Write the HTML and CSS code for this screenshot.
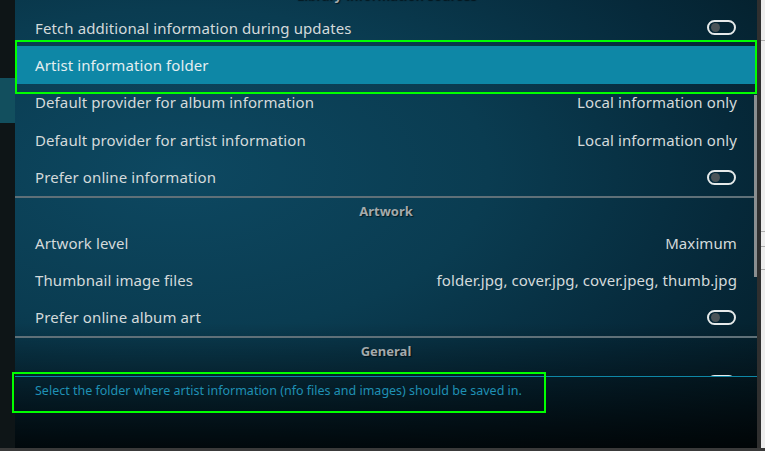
FILE: index.html
```html
<!DOCTYPE html>
<html lang="en">
<head>
    <meta charset="UTF-8">
    <meta name="viewport" content="width=device-width, initial-scale=1.0">
    <title>Music library settings</title>
    <link rel="stylesheet" href="styles.css">
</head>
<body>

<div class="app">
    <div class="sidebar">
        <div class="side-item active"></div>
    </div>

    <div class="panel">
        <div class="list">
            <div class="group-head">Library information sources</div>
            <div class="row"><span class="label">Fetch additional information during updates</span><span class="toggle"></span></div>
            <div class="row selected"><span class="label">Artist information folder</span></div>
            <div class="row"><span class="label">Default provider for album information</span><span class="value">Local information only</span></div>
            <div class="row"><span class="label">Default provider for artist information</span><span class="value">Local information only</span></div>
            <div class="row"><span class="label">Prefer online information</span><span class="toggle"></span></div>

            <div class="group-head">Artwork</div>
            <div class="row"><span class="label">Artwork level</span><span class="value">Maximum</span></div>
            <div class="row"><span class="label">Thumbnail image files</span><span class="value">folder.jpg, cover.jpg, cover.jpeg, thumb.jpg</span></div>
            <div class="row"><span class="label">Prefer online album art</span><span class="toggle"></span></div>

            <div class="group-head">General</div>
            <!-- следующая строка почти целиком скрыта, видно только верх переключателя -->
            <div class="row"><span class="label"></span><span class="toggle"></span></div>

            <div class="scrollbar"></div>
        </div>

        <div class="description">Select the folder where artist information (nfo files and images) should be saved in.</div>
    </div>

    <div class="frame"></div>
    <div class="desktop">
        <div class="desk-line"></div>
        <div class="desk-line"></div>
        <div class="desk-line"></div>
        <div class="desk-line"></div>
    </div>

    <!-- рамки-пометки поверх скриншота -->
    <div class="mark mark-row"></div>
    <div class="mark mark-desc"></div>
</div>
<div class="statusbar"></div>

</body>
</html>
```

FILE: styles.css
```css
body { margin: 0; padding: 0; width: 765px; height: 451px; overflow: hidden; background-color: #0e1517; font-family: "Noto Sans", "Open Sans", sans-serif; }
.app { position: relative; display: flex; height: 448px; }
.statusbar { height: 3px; background-color: #3a3a3a; }

.sidebar { width: 15px; background-color: #0e1517; }
.side-item.active { margin-top: 78px; height: 45px; background-color: #124f5e; }

.panel { width: 742px; display: flex; flex-direction: column;
    background:
        linear-gradient(to bottom, rgba(0,0,0,0) 0%, rgba(0,0,0,0) 72%, rgba(0,0,0,0.8) 100%),
        radial-gradient(ellipse 110% 95% at 22% 38%, #0d4861 0%, #0a3c51 38%, #06293a 68%, #031820 100%); }

.list { position: relative; height: 376px; overflow: hidden; }
.list > :first-child { margin-top: -20px; }

.group-head { height: 26px; border-top: 2px solid #5f7078; display: flex; align-items: center; justify-content: center; font-size: 13px; font-weight: bold; color: #a4aaac; text-shadow: 1px 1px 1px rgba(0,0,0,0.6); }
.list > .group-head:first-child { border-top: none; height: 29px; }

.row { height: 37.4px; display: flex; align-items: center; justify-content: space-between; padding: 0 20px; font-size: 15px; letter-spacing: 0.1px; color: #d4dadb; box-sizing: border-box; }
.row.selected { background-color: #0e87a6; color: #e4eef0; }
.value { color: #d4dadb; }

.toggle { position: relative; width: 25px; height: 11px; border: 2px solid #e6eaea; border-radius: 8px; margin-right: 1px; }
.toggle::before { content: ""; position: absolute; left: 2px; top: 1px; width: 9px; height: 9px; border-radius: 50%; background-color: #4b5458; }

.scrollbar { position: absolute; right: 0; top: 95px; width: 3px; height: 182px; background-color: #8a8e90; }

.description { flex: 1; border-top: 1px solid #0e87a6; padding: 5px 20px 0; font-size: 12.5px; line-height: 18px; color: #1f90b4; }

.frame { width: 4px; background-color: #2f2f2f; }
.desktop { width: 4px; background-color: #eeeeee; padding-top: 40px; }
.desk-line { height: 1px; background-color: #b0b0b0; margin-bottom: 60px; }
.desk-line:nth-child(2) { margin-top: 190px; margin-bottom: 14px; }
.desk-line:nth-child(3) { margin-bottom: 22px; }

.mark { position: absolute; border: 2px solid #00ff00; box-sizing: border-box; }
.mark-row { left: 15px; top: 40px; width: 742px; height: 54px; }
.mark-desc { left: 12px; top: 372px; width: 534px; height: 41px; }
```
